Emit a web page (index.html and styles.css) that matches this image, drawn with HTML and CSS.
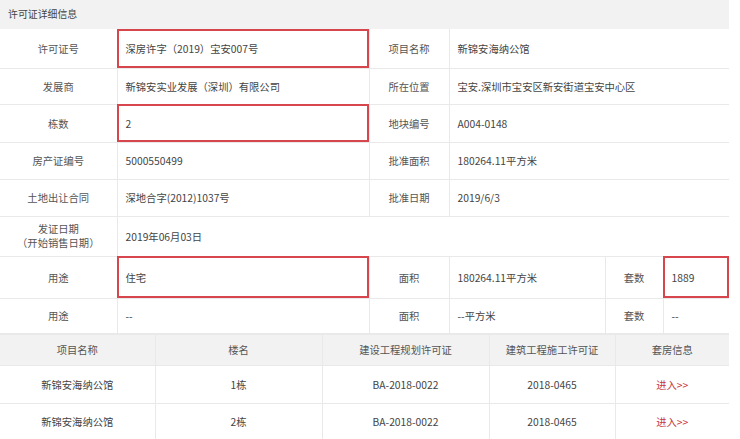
FILE: index.html
```html
<!DOCTYPE html>
<html lang="zh-CN">
<head>
<meta charset="utf-8">
<title>许可证详细信息</title>
<link rel="stylesheet" href="styles.css">
</head>
<body>
<div class="panel">
  <div class="panel-title">许可证详细信息</div>
  <table class="info">
    <colgroup>
      <col class="c1"><col class="c2"><col class="c3"><col class="c4"><col class="c5"><col class="c6">
    </colgroup>
    <tr class="r1">
      <th>许可证号</th><td class="mark">深房许字（2019）宝安007号</td>
      <th>项目名称</th><td colspan="3">新锦安海纳公馆</td>
    </tr>
    <tr class="r2">
      <th>发展商</th><td>新锦安实业发展（深圳）有限公司</td>
      <th>所在位置</th><td colspan="3">宝安.深圳市宝安区新安街道宝安中心区</td>
    </tr>
    <tr class="r3">
      <th>栋数</th><td class="mark">2</td>
      <th>地块编号</th><td colspan="3">A004-0148</td>
    </tr>
    <tr class="r4">
      <th>房产证编号</th><td>5000550499</td>
      <th>批准面积</th><td colspan="3">180264.11平方米</td>
    </tr>
    <tr class="r5">
      <th>土地出让合同</th><td>深地合字(2012)1037号</td>
      <th>批准日期</th><td colspan="3">2019/6/3</td>
    </tr>
    <tr class="r6">
      <th class="two">发证日期<br>（开始销售日期）</th><td colspan="5">2019年06月03日</td>
    </tr>
    <tr class="r7">
      <th>用途</th><td class="mark">住宅</td>
      <th>面积</th><td>180264.11平方米</td>
      <th>套数</th><td class="mark">1889</td>
    </tr>
    <tr class="r8">
      <th>用途</th><td>--</td>
      <th>面积</th><td>--平方米</td>
      <th>套数</th><td>--</td>
    </tr>
  </table>
  <table class="list">
    <colgroup>
      <col class="l1"><col class="l2"><col class="l3"><col class="l4"><col class="l5">
    </colgroup>
    <tr class="head">
      <th>项目名称</th><th>楼名</th><th>建设工程规划许可证</th><th>建筑工程施工许可证</th><th>套房信息</th>
    </tr>
    <tr class="row-a">
      <td>新锦安海纳公馆</td><td>1栋</td><td>BA-2018-0022</td><td>2018-0465</td><td><a class="enter" href="#">进入&gt;&gt;</a></td>
    </tr>
    <tr class="row-b">
      <td>新锦安海纳公馆</td><td>2栋</td><td>BA-2018-0022</td><td>2018-0465</td><td><a class="enter" href="#">进入&gt;&gt;</a></td>
    </tr>
  </table>
</div>
</body>
</html>
```

FILE: styles.css
```css
html, body {
  margin: 0;
  padding: 0;
  background: #ffffff;
}
body {
  font-family: "Noto Sans CJK SC", "Noto Sans", "Liberation Sans", sans-serif;
  font-size: 10.3px;
  color: #4a4a4a;
}
.panel {
  width: 729px;
}
.panel-title {
  height: 29px;
  line-height: 29px;
  padding-left: 8px;
  background: #f2f2f2;
  font-size: 9.9px;
  color: #444;
}
table {
  width: 729px;
  border-collapse: collapse;
  table-layout: fixed;
}
.info th, .info td {
  border: 1px solid #e9e9e9;
  padding: 0;
  vertical-align: middle;
  font-weight: normal;
}
.info tr:first-child th, .info tr:first-child td { border-top: none; }
.info th:first-child, .list th:first-child, .list td:first-child { border-left: none; }
.info tr > :last-child, .list tr > :last-child { border-right: none; }
.info th {
  text-align: center;
  color: #555;
}
.info td {
  text-align: left;
  padding-left: 8px;
  color: #444;
}
.c1 { width: 117px; }
.c2 { width: 252px; }
.c3 { width: 80px; }
.c4 { width: 156px; }
.c5 { width: 58px; }
.c6 { width: 66px; }
.r1 { height: 39px; }
.r2 { height: 36px; }
.r3 { height: 38px; }
.r4 { height: 37px; }
.r5 { height: 37px; }
.r6 { height: 40px; }
.r7 { height: 42px; }
.r8 { height: 35px; }
.info th.two { line-height: 14px; }
.info td.mark {
  outline: 2px solid #d8464d;
  outline-offset: -2px;
}
.list th, .list td {
  border: 1px solid #e9e9e9;
  text-align: center;
  vertical-align: middle;
  font-weight: normal;
  padding: 0;
  color: #444;
}
.list .head th {
  background: #f2f2f2;
  color: #555;
}
.list tr:last-child td { border-bottom: none; }
.l1 { width: 155px; }
.l2 { width: 167px; }
.l3 { width: 167px; }
.l4 { width: 126px; }
.l5 { width: 114px; }
.head { height: 31px; }
.row-a { height: 38px; }
.row-b { height: 37px; }
.enter {
  color: #c8363c;
  text-decoration: none;
}
```
